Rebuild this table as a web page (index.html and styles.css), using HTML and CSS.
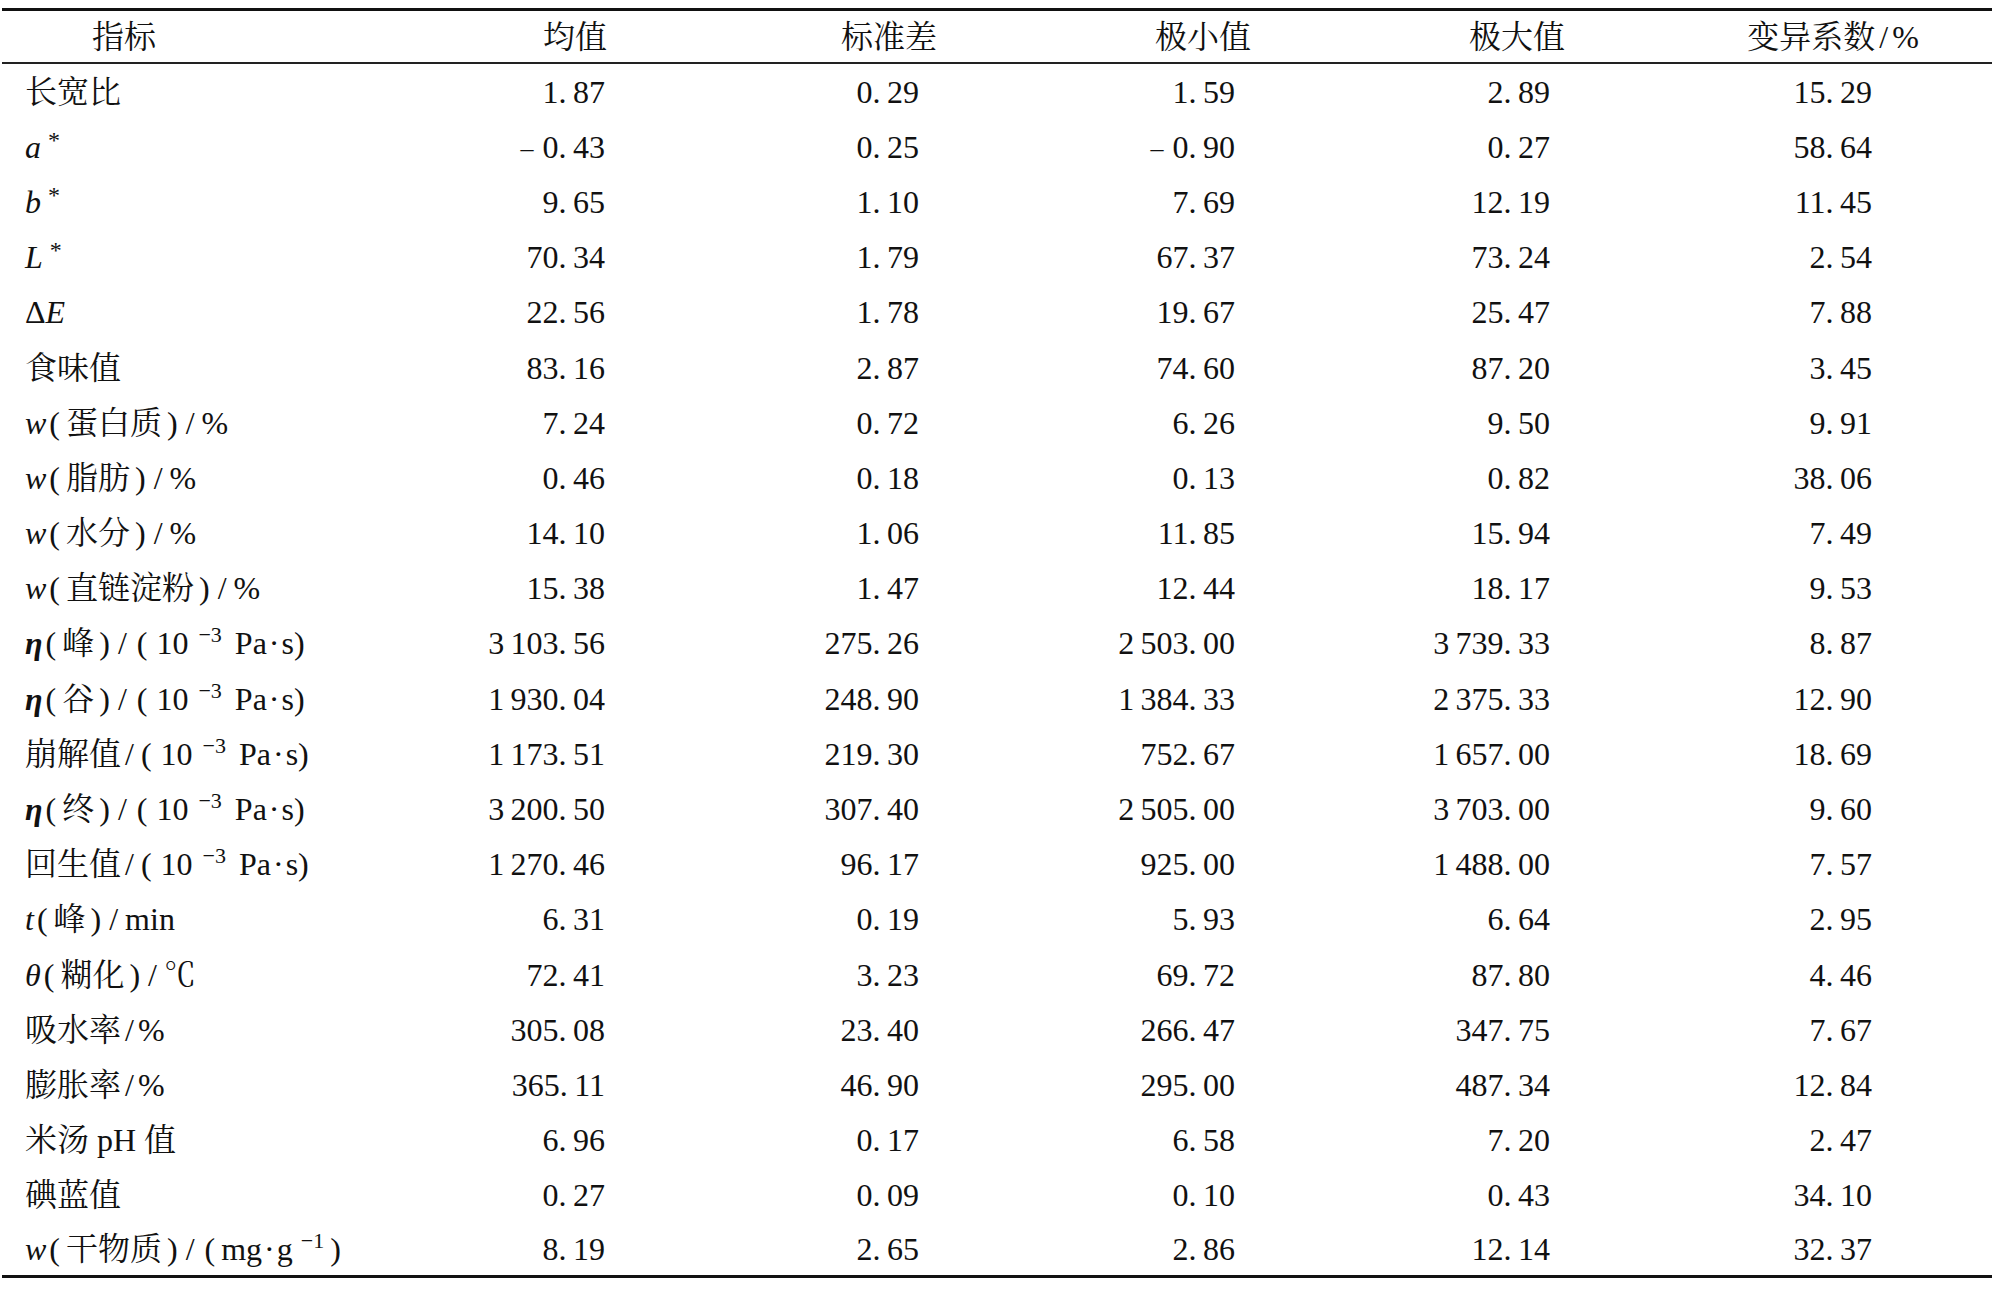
FILE: index.html
```html
<!DOCTYPE html>
<html lang="zh-CN">
<head>
<meta charset="utf-8">
<title>指标统计</title>
<link rel="stylesheet" href="styles.css">
</head>
<body>
<div class="page">
<table class="stats">
<colgroup>
<col class="c-label"><col class="c-num"><col class="c-num"><col class="c-num"><col class="c-num"><col class="c-last">
</colgroup>
<thead>
<tr>
<th class="lab">指标</th><th>均值</th><th>标准差</th><th>极小值</th><th>极大值</th><th>变异系数<span class="s">/</span>%</th>
</tr>
</thead>
<tbody>
<tr><td class="lab">长宽比</td><td>1.&thinsp;87</td><td>0.&thinsp;29</td><td>1.&thinsp;59</td><td>2.&thinsp;89</td><td>15.&thinsp;29</td></tr>
<tr><td class="lab"><i>a</i><sup class="ast">*</sup></td><td><span class="neg">–</span>0.&thinsp;43</td><td>0.&thinsp;25</td><td><span class="neg">–</span>0.&thinsp;90</td><td>0.&thinsp;27</td><td>58.&thinsp;64</td></tr>
<tr><td class="lab"><i>b</i><sup class="ast">*</sup></td><td>9.&thinsp;65</td><td>1.&thinsp;10</td><td>7.&thinsp;69</td><td>12.&thinsp;19</td><td>11.&thinsp;45</td></tr>
<tr><td class="lab"><i>L</i><sup class="ast">*</sup></td><td>70.&thinsp;34</td><td>1.&thinsp;79</td><td>67.&thinsp;37</td><td>73.&thinsp;24</td><td>2.&thinsp;54</td></tr>
<tr><td class="lab">Δ<i>E</i></td><td>22.&thinsp;56</td><td>1.&thinsp;78</td><td>19.&thinsp;67</td><td>25.&thinsp;47</td><td>7.&thinsp;88</td></tr>
<tr><td class="lab">食味值</td><td>83.&thinsp;16</td><td>2.&thinsp;87</td><td>74.&thinsp;60</td><td>87.&thinsp;20</td><td>3.&thinsp;45</td></tr>
<tr><td class="lab"><i>w</i><span class="o">(</span>蛋白质<span class="c">)</span><span class="s w">/</span>%</td><td>7.&thinsp;24</td><td>0.&thinsp;72</td><td>6.&thinsp;26</td><td>9.&thinsp;50</td><td>9.&thinsp;91</td></tr>
<tr><td class="lab"><i>w</i><span class="o">(</span>脂肪<span class="c">)</span><span class="s w">/</span>%</td><td>0.&thinsp;46</td><td>0.&thinsp;18</td><td>0.&thinsp;13</td><td>0.&thinsp;82</td><td>38.&thinsp;06</td></tr>
<tr><td class="lab"><i>w</i><span class="o">(</span>水分<span class="c">)</span><span class="s w">/</span>%</td><td>14.&thinsp;10</td><td>1.&thinsp;06</td><td>11.&thinsp;85</td><td>15.&thinsp;94</td><td>7.&thinsp;49</td></tr>
<tr><td class="lab"><i>w</i><span class="o">(</span>直链淀粉<span class="c">)</span><span class="s w">/</span>%</td><td>15.&thinsp;38</td><td>1.&thinsp;47</td><td>12.&thinsp;44</td><td>18.&thinsp;17</td><td>9.&thinsp;53</td></tr>
<tr><td class="lab"><b><i>η</i></b><span class="o">(</span>峰<span class="c">)</span><span class="s w">/</span><span class="o n">(</span>10<sup class="exp">−3</sup>Pa<span class="dot">·</span>s)</td><td>3&thinsp;103.&thinsp;56</td><td>275.&thinsp;26</td><td>2&thinsp;503.&thinsp;00</td><td>3&thinsp;739.&thinsp;33</td><td>8.&thinsp;87</td></tr>
<tr><td class="lab"><b><i>η</i></b><span class="o">(</span>谷<span class="c">)</span><span class="s w">/</span><span class="o n">(</span>10<sup class="exp">−3</sup>Pa<span class="dot">·</span>s)</td><td>1&thinsp;930.&thinsp;04</td><td>248.&thinsp;90</td><td>1&thinsp;384.&thinsp;33</td><td>2&thinsp;375.&thinsp;33</td><td>12.&thinsp;90</td></tr>
<tr><td class="lab">崩解值<span class="s">/</span><span class="o n">(</span>10<sup class="exp">−3</sup>Pa<span class="dot">·</span>s)</td><td>1&thinsp;173.&thinsp;51</td><td>219.&thinsp;30</td><td>752.&thinsp;67</td><td>1&thinsp;657.&thinsp;00</td><td>18.&thinsp;69</td></tr>
<tr><td class="lab"><b><i>η</i></b><span class="o">(</span>终<span class="c">)</span><span class="s w">/</span><span class="o n">(</span>10<sup class="exp">−3</sup>Pa<span class="dot">·</span>s)</td><td>3&thinsp;200.&thinsp;50</td><td>307.&thinsp;40</td><td>2&thinsp;505.&thinsp;00</td><td>3&thinsp;703.&thinsp;00</td><td>9.&thinsp;60</td></tr>
<tr><td class="lab">回生值<span class="s">/</span><span class="o n">(</span>10<sup class="exp">−3</sup>Pa<span class="dot">·</span>s)</td><td>1&thinsp;270.&thinsp;46</td><td>96.&thinsp;17</td><td>925.&thinsp;00</td><td>1&thinsp;488.&thinsp;00</td><td>7.&thinsp;57</td></tr>
<tr><td class="lab"><i>t</i><span class="o">(</span>峰<span class="c">)</span><span class="s w">/</span>min</td><td>6.&thinsp;31</td><td>0.&thinsp;19</td><td>5.&thinsp;93</td><td>6.&thinsp;64</td><td>2.&thinsp;95</td></tr>
<tr><td class="lab"><i>θ</i><span class="o">(</span>糊化<span class="c">)</span><span class="s w">/</span>℃</td><td>72.&thinsp;41</td><td>3.&thinsp;23</td><td>69.&thinsp;72</td><td>87.&thinsp;80</td><td>4.&thinsp;46</td></tr>
<tr><td class="lab">吸水率<span class="s">/</span>%</td><td>305.&thinsp;08</td><td>23.&thinsp;40</td><td>266.&thinsp;47</td><td>347.&thinsp;75</td><td>7.&thinsp;67</td></tr>
<tr><td class="lab">膨胀率<span class="s">/</span>%</td><td>365.&thinsp;11</td><td>46.&thinsp;90</td><td>295.&thinsp;00</td><td>487.&thinsp;34</td><td>12.&thinsp;84</td></tr>
<tr><td class="lab">米汤 pH 值</td><td>6.&thinsp;96</td><td>0.&thinsp;17</td><td>6.&thinsp;58</td><td>7.&thinsp;20</td><td>2.&thinsp;47</td></tr>
<tr><td class="lab">碘蓝值</td><td>0.&thinsp;27</td><td>0.&thinsp;09</td><td>0.&thinsp;10</td><td>0.&thinsp;43</td><td>34.&thinsp;10</td></tr>
<tr><td class="lab"><i>w</i><span class="o">(</span>干物质<span class="c">)</span><span class="s w">/</span><span class="o">(</span>mg<span class="dot">·</span>g<sup class="exp e1">−1</sup>)</td><td>8.&thinsp;19</td><td>2.&thinsp;65</td><td>2.&thinsp;86</td><td>12.&thinsp;14</td><td>32.&thinsp;37</td></tr>
</tbody>
</table>
</div>
</body>
</html>
```
FILE: styles.css
```css
html, body {
  margin: 0;
  padding: 0;
  background: #ffffff;
}

body {
  font-family: "Liberation Serif", "Noto Serif CJK SC", "Noto Sans CJK SC", serif;
  font-size: 32px;
  color: #111111;
}

.page {
  padding: 8px 0 0 2px;
}

.stats {
  width: 1990px;
  table-layout: fixed;
  border-collapse: separate;
  border-spacing: 0;
}

.c-label { width: 416px; }
.c-num { width: 314px; }
.c-last { width: 318px; }

.stats th {
  height: 51px;
  padding: 0;
  font-weight: normal;
  text-align: center;
  vertical-align: middle;
  line-height: 1;
  border-top: 3px solid #111111;
  border-bottom: 2px solid #222222;
  white-space: nowrap;
}

.stats th.lab {
  text-align: left;
  padding-left: 90px;
}

.stats tbody tr {
  height: 55.2px;
}

.stats td {
  padding: 0 127px 0 0;
  text-align: right;
  vertical-align: middle;
  line-height: 1;
  white-space: nowrap;
}

.stats td:nth-child(4) { padding-right: 125px; }
.stats td:nth-child(5) { padding-right: 124px; }
.stats td:nth-child(6) { padding-right: 120px; }

.stats td.lab {
  text-align: left;
  padding: 0 0 0 23px;
}

.stats tbody tr:last-child td {
  border-bottom: 3px solid #111111;
}

.stats i {
  font-style: italic;
}

.stats b {
  font-weight: bold;
}

/* label punctuation spacing */
.o {
  margin: 0 6px 0 3px;
}

.o.n {
  margin-right: 9px;
}

.c {
  margin: 0 0 0 5px;
}

.s {
  margin: 0 4px;
}

.s.w {
  margin: 0 7px 0 8px;
}

.dot {
  margin: 0 2px;
}

.neg {
  display: inline-block;
  font-size: 26px;
  vertical-align: 1px;
  margin-right: 9px;
}

.stats sup {
  line-height: 0;
}

.stats sup.ast {
  font-size: 24px;
  vertical-align: 10px;
  margin-left: 7px;
}

.stats sup.exp {
  font-size: 22px;
  vertical-align: 12px;
  margin: 0 13px 0 10px;
}

.stats sup.exp.e1 {
  margin: 0 6px 0 8px;
}
```
